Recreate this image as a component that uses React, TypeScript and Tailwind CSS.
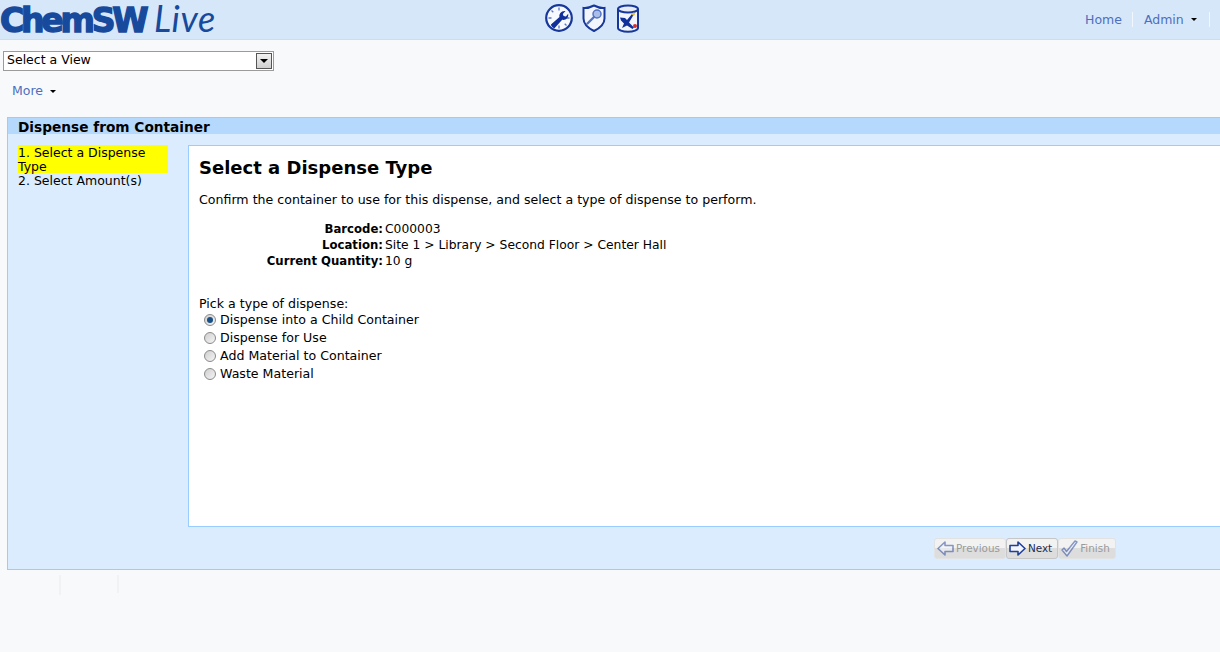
const font = { fontFamily: '"DejaVu Sans", Verdana, sans-serif' };

const ClockIcon = () => (
  <svg width="30" height="30" viewBox="0 0 30 30">
    <circle cx="15" cy="15" r="12.800" fill="#f6f9fe" stroke="#17379a" strokeWidth="2.200" />
    <path d="M15 4.500v3M15 22.500v3M4.500 15h3M22.500 15h3M7.500 7.500l1.800 1.800M20.700 20.700l1.800 1.800M7.500 22.500l1.800-1.800" stroke="#5a77c8" strokeWidth="1.300" />
    <path d="M7 21.500l8.500-7.500c-.8-3 1.700-6.500 6-6l-2.700 3 .8 2 2.300.4 2.300-2.600c.6 4-2.600 6.800-6 6l-7.500 8.200c-1 .9-3.500-1.800-3.700-3.500z" fill="#12309a" />
  </svg>
);

const ShieldIcon = () => (
  <svg width="26" height="30" viewBox="0 0 26 30">
    <path d="M2.500 5c4 .5 7-.7 10.500-2.500C16.500 4.300 19.500 5.500 23.500 5v10.500c0 5.500-4.500 9.500-10.500 12.500C7 25 2.500 21 2.500 15.500z" fill="#f2f6fc" stroke="#17379a" strokeWidth="2" />
    <circle cx="16" cy="11" r="4" fill="#a9bde8" stroke="#5472c4" strokeWidth="1.500" />
    <path d="M13 14l-6.500 6.500" stroke="#5472c4" strokeWidth="2.400" strokeLinecap="round" />
  </svg>
);

const DrumIcon = () => (
  <svg width="24" height="30" viewBox="0 0 24 30">
    <path d="M2 6v19c0 2 4.500 3.800 10 3.800S22 27 22 25V6" fill="#f2f6fc" stroke="#17379a" strokeWidth="2" />
    <ellipse cx="12" cy="6" rx="10" ry="3.600" fill="#e6ebf5" stroke="#17379a" strokeWidth="2" />
    <path d="M4 14.500l5 .5 2 2 5-6 1.500 1-4.500 7.500 5 5-1.500 1.500-5.500-3.500-5 2.500 2-4.500-3-3z" fill="#12309a" />
    <circle cx="17.500" cy="11" r="1.500" fill="#e5c33b" />
    <circle cx="19" cy="23" r="2" fill="#d3302a" />
  </svg>
);

const ArrowIcon = ({ dir, muted }: { dir: 'left' | 'right'; muted?: boolean }) => (
  <svg width="17" height="15" viewBox="0 0 17 15" className={muted ? 'opacity-50' : ''}>
    <path
      d={dir === 'right' ? 'M1 4.500h8V1l7 6.500L9 14v-3.500H1z' : 'M16 4.500H8V1L1 7.500 8 14v-3.500h8z'}
      fill="#f3f6fc"
      stroke="#1f3f99"
      strokeWidth="1.600"
      strokeLinejoin="round"
    />
  </svg>
);

const CheckIcon = () => (
  <svg width="17" height="17" viewBox="0 0 17 17" className="opacity-50">
    <path d="M1 10l2-2 2.500 3.500L14 1l2 1L6 16z" fill="#f3f6fc" stroke="#1f3f99" strokeWidth="1.400" strokeLinejoin="round" />
  </svg>
);

const Caret = () => (
  <span className="inline-block w-0 h-0 border-x-[3px] border-x-transparent border-t-[3px] border-t-black" />
);

const WizardButton = ({ children, disabled }: { children: React.ReactNode; disabled?: boolean }) => (
  <button
    className={`h-[21px] flex items-center gap-[2px] pl-[2px] pr-[5px] rounded-[3px] border text-[10.4px] bg-gradient-to-b from-[#f2f2f2] from-50% to-[#dddddd] to-50% ${
      disabled ? 'border-[#e2e2e2] text-[#9a9a9a]' : 'border-[#c6c6c6] text-[#222b55]'
    }`}
  >
    {children}
  </button>
);

const Radio = ({ label, checked }: { label: string; checked?: boolean }) => (
  <label className="flex items-center h-[18px] pl-[5px] gap-[4px] text-[12.6px]">
    <span className="w-[12px] h-[12px] rounded-full border border-[#8a8a8a] bg-gradient-to-br from-[#cfcfcf] to-[#f5f5f5] flex items-center justify-center">
      {checked && <span className="w-[6px] h-[6px] rounded-full bg-[#174f86]" />}
    </span>
    <span>{label}</span>
  </label>
);

const rows = [
  ['Barcode:', 'C000003'],
  ['Location:', 'Site 1 > Library > Second Floor > Center Hall'],
  ['Current Quantity:', '10 g'],
];

export default function App() {
  return (
    <div className="w-[1220px] h-[652px] overflow-hidden bg-[#f8f9fb] text-[12.5px] text-black" style={font}>
      <header className="h-[40px] bg-[#d6e7f9] border-b border-[#cfdcec] flex items-center w-[1300px]">
        <div className="w-[545px] flex items-baseline text-[#174a9c] select-none">
          <span className="text-[33px] leading-[38px] font-bold tracking-[-3.2px] [-webkit-text-stroke:1.4px_#174a9c] w-[154px]">
            ChemSW
          </span>
          <span className="text-[36px] leading-[38px] tracking-[0.6px] italic" style={{ fontFamily: 'Lato, sans-serif' }}>
            Live
          </span>
        </div>
        <div className="flex items-center w-[541px] gap-[7px] -mt-[3px] -ml-[1px]">
          <ClockIcon />
          <ShieldIcon />
          <span className="ml-[2px] flex"><DrumIcon /></span>
        </div>
        <nav className="flex items-center text-[#4d6fbd] -mt-[1px]">
          <a className="pr-[10px] border-r border-[#f2f7fd] leading-[15px]">Home</a>
          <a className="pl-[11px] pr-[12px] border-r border-[#f2f7fd] leading-[15px] flex items-center gap-[7px]">
            Admin <Caret />
          </a>
          <a className="pl-[11px]">Preferences</a>
        </nav>
      </header>

      <div className="pt-[11px] pl-[3px]">
        <div className="w-[271px] h-[20px] border border-[#9b9b9b] bg-white flex items-center justify-between pl-[3px] pr-[1px]">
          <span className="-mt-[2px]">Select a View</span>
          <span className="w-[16px] h-[16px] border border-[#555] bg-gradient-to-b from-[#f2f2f2] to-[#cfcfcf] flex items-center justify-center">
            <span className="inline-block w-0 h-0 border-x-[4px] border-x-transparent border-t-[4px] border-t-black" />
          </span>
        </div>
      </div>

      <div className="pl-[12px] mt-[12px] flex items-center gap-[7px] text-[#4d6fbd] h-[16px]">
        <a>More</a>
        <Caret />
      </div>

      <section className="ml-[7px] mt-[18px] w-[1300px] h-[453px] border border-[#99ccff] bg-[#dbecff] flex flex-col">
        <h2 className="h-[16px] bg-[#b5d8fd] pl-[10px] text-[13.7px] leading-[18px] font-bold">Dispense from Container</h2>
        <div className="flex mt-[11px] pl-[10px]">
          <ol className="w-[150px] leading-[14px] shrink-0">
            <li className="bg-[#ffff00] pt-[1px] h-[28px]">1. Select a Dispense Type</li>
            <li className="pt-[1px]">2. Select Amount(s)</li>
          </ol>
          <div className="ml-[20px] w-[1100px] h-[382px] border border-[#99ccff] bg-white pl-[10px] pt-[11px]">
            <h1 className="text-[18px] leading-[22px] font-bold">Select a Dispense Type</h1>
            <p className="mt-[13px] leading-[16px] text-[12.6px]">Confirm the container to use for this dispense, and select a type of dispense to perform.</p>
            <dl className="mt-[13px] leading-[16px]">
              {rows.map(([k, v]) => (
                <div key={k} className="flex gap-[2px]">
                  <dt className="w-[184px] text-right font-bold text-[11.7px]">{k}</dt>
                  <dd className="text-[12.3px]">{v}</dd>
                </div>
              ))}
            </dl>
            <p className="mt-[27px] leading-[16px] text-[12.6px]">Pick a type of dispense:</p>
            <div className="-mt-[1px]">
              <Radio label="Dispense into a Child Container" checked />
              <Radio label="Dispense for Use" />
              <Radio label="Add Material to Container" />
              <Radio label="Waste Material" />
            </div>
          </div>
        </div>
        <div className="flex ml-[926px] mt-[11px]">
          <WizardButton disabled><ArrowIcon dir="left" muted />Previous</WizardButton>
          <WizardButton><ArrowIcon dir="right" />Next</WizardButton>
          <WizardButton disabled><CheckIcon />Finish</WizardButton>
        </div>
      </section>

      <div className="flex mt-[5px] ml-[59px] gap-[56px]">
        <span className="w-[2px] h-[20px] bg-[#f1f2f5]" />
        <span className="w-[2px] h-[18px] bg-[#f1f2f5]" />
      </div>
    </div>
  );
}
